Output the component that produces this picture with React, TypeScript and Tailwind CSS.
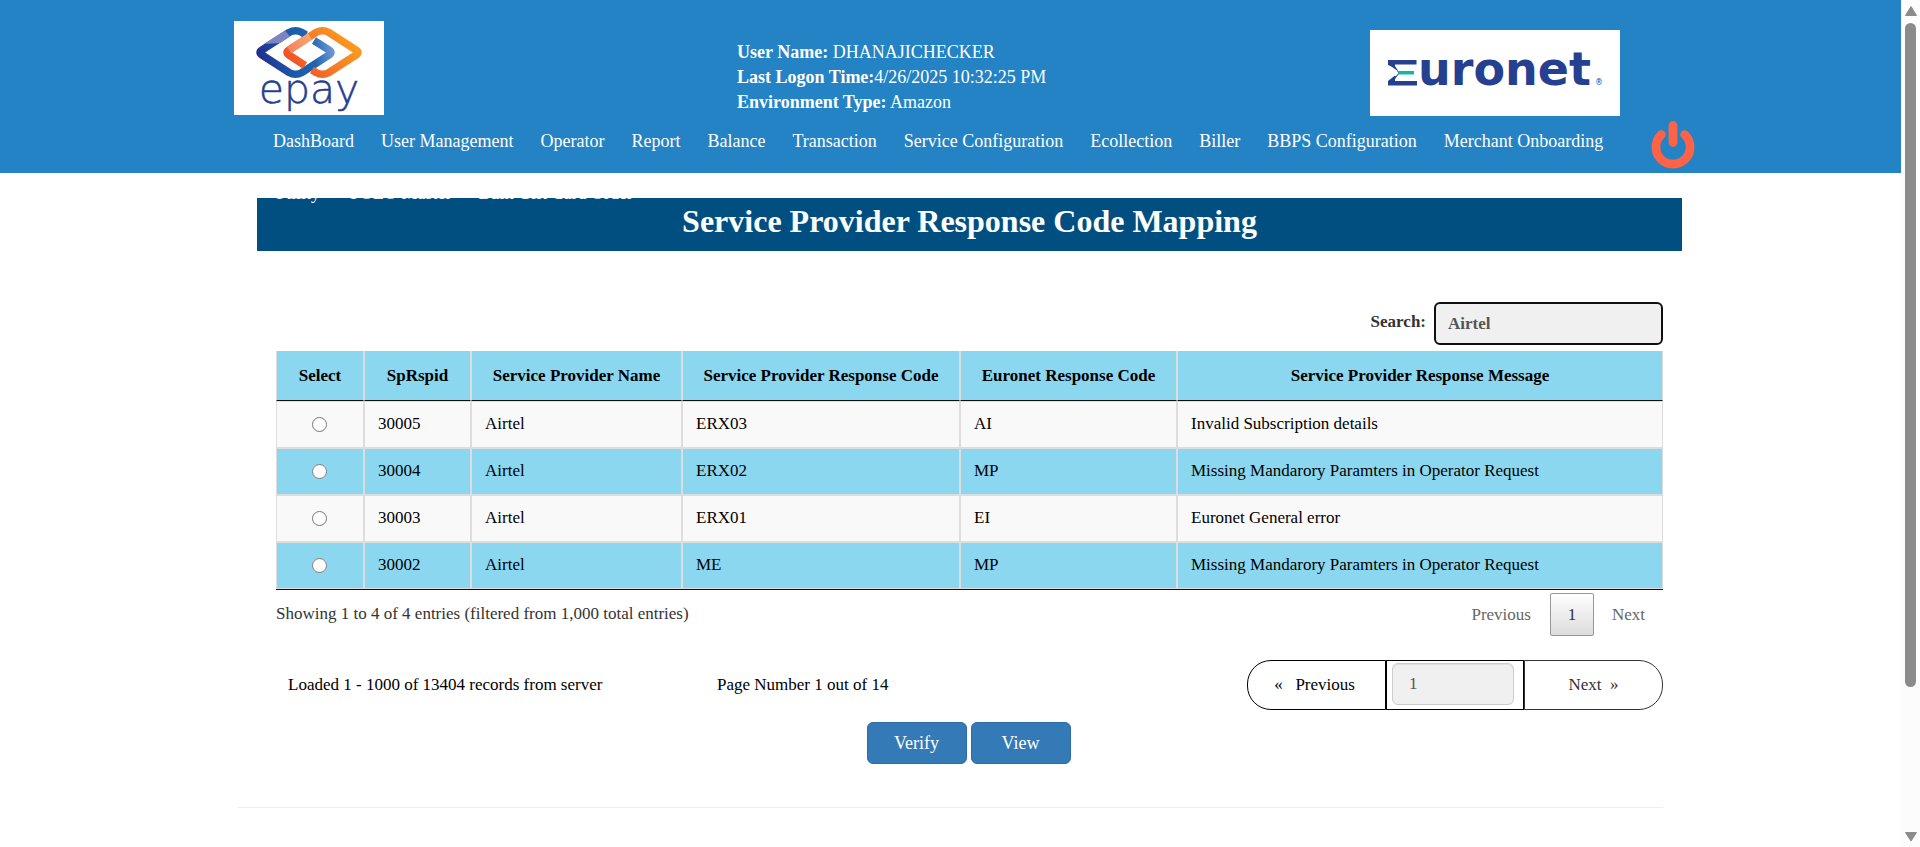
import React from "react";

const navItems = ["DashBoard", "User Management", "Operator", "Report", "Balance", "Transaction", "Service Configuration", "Ecollection", "Biller", "BBPS Configuration", "Merchant Onboarding"];
const overflowItems = ["Utility", "UOLO Master", "Bulk Gift Card Order"];

const rows = [
  { id: "30005", name: "Airtel", code: "ERX03", euronet: "AI", message: "Invalid Subscription details" },
  { id: "30004", name: "Airtel", code: "ERX02", euronet: "MP", message: "Missing Mandarory Paramters in Operator Request" },
  { id: "30003", name: "Airtel", code: "ERX01", euronet: "EI", message: "Euronet General error" },
  { id: "30002", name: "Airtel", code: "ME", euronet: "MP", message: "Missing Mandarory Paramters in Operator Request" },
];

const columns = [
  { label: "Select", width: "w-[88px]" },
  { label: "SpRspid", width: "w-[107px]" },
  { label: "Service Provider Name", width: "w-[211px]" },
  { label: "Service Provider Response Code", width: "w-[278px]" },
  { label: "Euronet Response Code", width: "w-[217px]" },
  { label: "Service Provider Response Message", width: "" },
];

function EpayLogo() {
  return (
    <svg viewBox="0 0 150 94" className="h-[94px] w-[150px] bg-white" role="img" aria-label="epay">
      <defs>
        <linearGradient id="blue" gradientUnits="userSpaceOnUse" x1="25" y1="40" x2="101" y2="24">
          <stop offset="0" stopColor="#22308f" />
          <stop offset=".45" stopColor="#1c5cab" />
          <stop offset=".7" stopColor="#1f63b0" />
          <stop offset="1" stopColor="#7ba0d8" />
        </linearGradient>
        <linearGradient id="orange" gradientUnits="userSpaceOnUse" x1="60" y1="50" x2="110" y2="10">
          <stop offset="0" stopColor="#f04e23" />
          <stop offset=".5" stopColor="#f57a2a" />
          <stop offset="1" stopColor="#fb9a1c" />
        </linearGradient>
        <linearGradient id="glow" gradientUnits="userSpaceOnUse" x1="50" y1="31" x2="74" y2="15">
          <stop offset="0" stopColor="#f57c55" />
          <stop offset="1" stopColor="#f9a272" />
        </linearGradient>
      </defs>
      <g fill="none" strokeWidth="7.5">
        <path d="M80 19.500L95 29Q99 31.500 95 34L68 51.500Q61.500 55 55 51.500L28 34Q24 31.500 28 29L55 11.500Q61.500 8 68 11.500L72 14" stroke="url(#blue)" />
        <path d="M78 49L82 51.500Q88.500 55 95 51.500L122 34Q126 31.500 122 29L95 11.500Q88.500 8 82 11.500L55 29Q51 31.500 55 34L71 44.500" stroke="url(#orange)" />
        <path d="M76 15.500L55 29" stroke="url(#glow)" />
      </g>
      <path d="M30 23L51 9.500L56 15.500L46 22Z" fill="#7d84c2" />
      <text x="75" y="82" textAnchor="middle" fontFamily="'DejaVu Sans', sans-serif" fontWeight="200" fontSize="41" fill="#23408f" stroke="#23408f" strokeWidth=".5">epay</text>
    </svg>
  );
}

function EuronetLogo() {
  return (
    <svg viewBox="0 0 250 86" className="h-[86px] w-[250px] bg-white" role="img" aria-label="Euronet">
      <path d="M18 30H46.500V34.500H25V38L18 35ZM18 55.500V51L25 45.500V51H47V55.500Z" fill="#253f91" />
      <path d="M18 34L27 40.500L28.500 43L27 45L18 52L25 52V49L29.500 43L25 36V34Z" fill="#253f91" />
      <path d="M18 38.500L26 43L18 48Z" fill="#fff" />
      <path d="M27 41H44V44.500H27L29 42.800Z" fill="#12b8a6" />
      <text x="48" y="55" fontFamily="'DejaVu Sans', sans-serif" fontWeight="700" fontSize="46" fill="#253f91">uronet</text>
      <text x="225" y="55" fontFamily="'DejaVu Sans', sans-serif" fontSize="8" fill="#253f91">®</text>
    </svg>
  );
}

function PowerIcon() {
  return (
    <svg viewBox="0 0 44 48" className="h-12 w-11" fill="none" stroke="#ff6347" strokeLinecap="round" aria-hidden="true">
      <path d="M22 4.500V21.500" strokeWidth="8.800" />
      <path d="M10.300 13.600A17.100 17.100 0 1 0 33.700 13.600" strokeWidth="8.800" />
    </svg>
  );
}

function Scrollbar() {
  return (
    <div className="flex w-[19px] shrink-0 flex-col items-center bg-[#fcfcfc] pt-1 pb-1" aria-hidden="true">
      <svg viewBox="0 0 14 14" className="h-[14px] w-[14px]"><path d="M7 2.500L12.500 11.500H1.500Z" fill="#8b8b8b" stroke="#8b8b8b" strokeLinejoin="round" /></svg>
      <div className="mt-[5px] flex w-[11px] grow flex-col">
        <div className="h-[664px] rounded-full bg-[#8b8b8b]" />
      </div>
      <svg viewBox="0 0 14 14" className="h-[14px] w-[14px]"><path d="M7 12L12.500 3.500H1.500Z" fill="#8b8b8b" stroke="#8b8b8b" strokeLinejoin="round" /></svg>
    </div>
  );
}

function Header() {
  return (
    <header className="h-[173px] bg-[#2483c4] pl-[234px] text-[18px] leading-[25px] text-white">
      <div className="flex h-[121px] items-start">
        <div className="w-[503px] pt-[21px]"><EpayLogo /></div>
        <div className="w-[633px] pt-10">
          <p><b>User Name:</b> DHANAJICHECKER</p>
          <p><b>Last Logon Time:</b>4/26/2025 10:32:25 PM</p>
          <p><b>Environment Type:</b> Amazon</p>
        </div>
        <div className="pt-[30px]"><EuronetLogo /></div>
      </div>
      <div className="flex items-start">
        <nav className="w-[1417px] pl-[39px] pt-2">
          <ul className="flex gap-x-[27px] whitespace-nowrap">
            {navItems.map((item) => <li key={item}><a href="#">{item}</a></li>)}
          </ul>
          <ul className="mt-[27px] flex gap-x-[27px] whitespace-nowrap">
            {overflowItems.map((item) => <li key={item}><a href="#">{item}</a></li>)}
          </ul>
        </nav>
        <button type="button" aria-label="Log out"><PowerIcon /></button>
      </div>
    </header>
  );
}

export default function App() {
  const cell = "border border-[#ddd] px-[13px] pb-[2px]";
  return (
    <div className="flex min-h-screen bg-white font-['Liberation_Serif',serif] text-[17px] text-black">
      <div className="min-w-0 grow">
        <Header />
        <main className="pl-[238px] pr-[238px] pt-[25px]">
          <div className="-mr-[19px] ml-[19px]">
            <h1 className="h-[53px] bg-[#014f80] pt-[3px] text-center text-[32px] leading-[40px] font-bold text-white">Service Provider Response Code Mapping</h1>
          </div>
          <section className="pl-[38px] pt-[51px]">
            <div className="flex items-start justify-end text-[#333]">
              <label htmlFor="search" className="pr-2 pt-[7px] font-bold">Search:</label>
              <input id="search" type="text" defaultValue="Airtel" className="h-[43px] w-[229px] rounded-md border-2 border-[#101010] bg-[#f0f0f0] px-3 font-bold text-[#555]" />
            </div>
            <table className="mt-[6px] w-full table-fixed border-separate border-spacing-0 border-b border-[#111]">
              <thead>
                <tr className="h-[50px] bg-[#8bd7f0]">
                  {columns.map((c) => (
                    <th key={c.label} className={`border-x border-b border-x-[#ddd] border-b-[#111] font-bold ${c.width}`}>{c.label}</th>
                  ))}
                </tr>
              </thead>
              <tbody>
                {rows.map((r) => (
                  <tr key={r.id} className="h-[47px] odd:bg-[#f9f9f9] even:bg-[#8bd7f0]">
                    <td className="border border-[#ddd] pr-[2px] text-center">
                      <input type="radio" name="mapping" aria-label={`Select ${r.id}`} className="mb-[2px] h-[15px] w-[15px] align-middle" />
                    </td>
                    <td className={cell}>{r.id}</td>
                    <td className={cell}>{r.name}</td>
                    <td className={cell}>{r.code}</td>
                    <td className={cell}>{r.euronet}</td>
                    <td className={cell}>{r.message}</td>
                  </tr>
                ))}
              </tbody>
            </table>
            <div className="mt-[3px] flex h-[43px] items-center justify-between text-[#333]">
              <p className="pb-[2px]">Showing 1 to 4 of 4 entries (filtered from 1,000 total entries)</p>
              <div className="flex items-center text-[#666]">
                <button type="button" className="px-[19px]">Previous</button>
                <button type="button" className="h-[43px] w-11 rounded-xs border border-[#979797] bg-linear-to-b from-white to-[#dcdcdc] text-[#333]">1</button>
                <button type="button" className="px-[18px]">Next</button>
              </div>
            </div>
            <div className="mt-6 flex h-[50px] items-center">
              <p className="w-[441px] pl-3">Loaded 1 - 1000 of 13404 records from server</p>
              <p>Page Number 1 out of 14</p>
              <div className="ml-auto flex h-[50px]">
                <button type="button" className="w-[139px] rounded-l-3xl border border-black pr-1">«&nbsp;&nbsp; Previous</button>
                <div className="w-[138px] border border-black pt-[2px] pl-[5px]">
                  <input type="text" aria-label="Page number" defaultValue="1" className="h-[42px] w-[122px] rounded-md border border-[#ccc] bg-[#f0f0f0] px-4 text-[#555] shadow-[inset_0_1px_1px_rgba(0,0,0,0.075)]" />
                </div>
                <button type="button" className="w-[139px] rounded-r-3xl border border-[#333] text-[#333]">Next&nbsp; »</button>
              </div>
            </div>
            <div className="mt-3 flex justify-center gap-1 pr-[2px] text-[18px] text-white">
              <button type="button" className="h-[42px] w-[100px] rounded-md border border-[#2e6da4] bg-[#337ab7]">Verify</button>
              <button type="button" className="h-[42px] w-[100px] rounded-md border border-[#2e6da4] bg-[#337ab7]">View</button>
            </div>
          </section>
          <hr className="mt-[43px] border-[#eee]" />
        </main>
      </div>
      <Scrollbar />
    </div>
  );
}
